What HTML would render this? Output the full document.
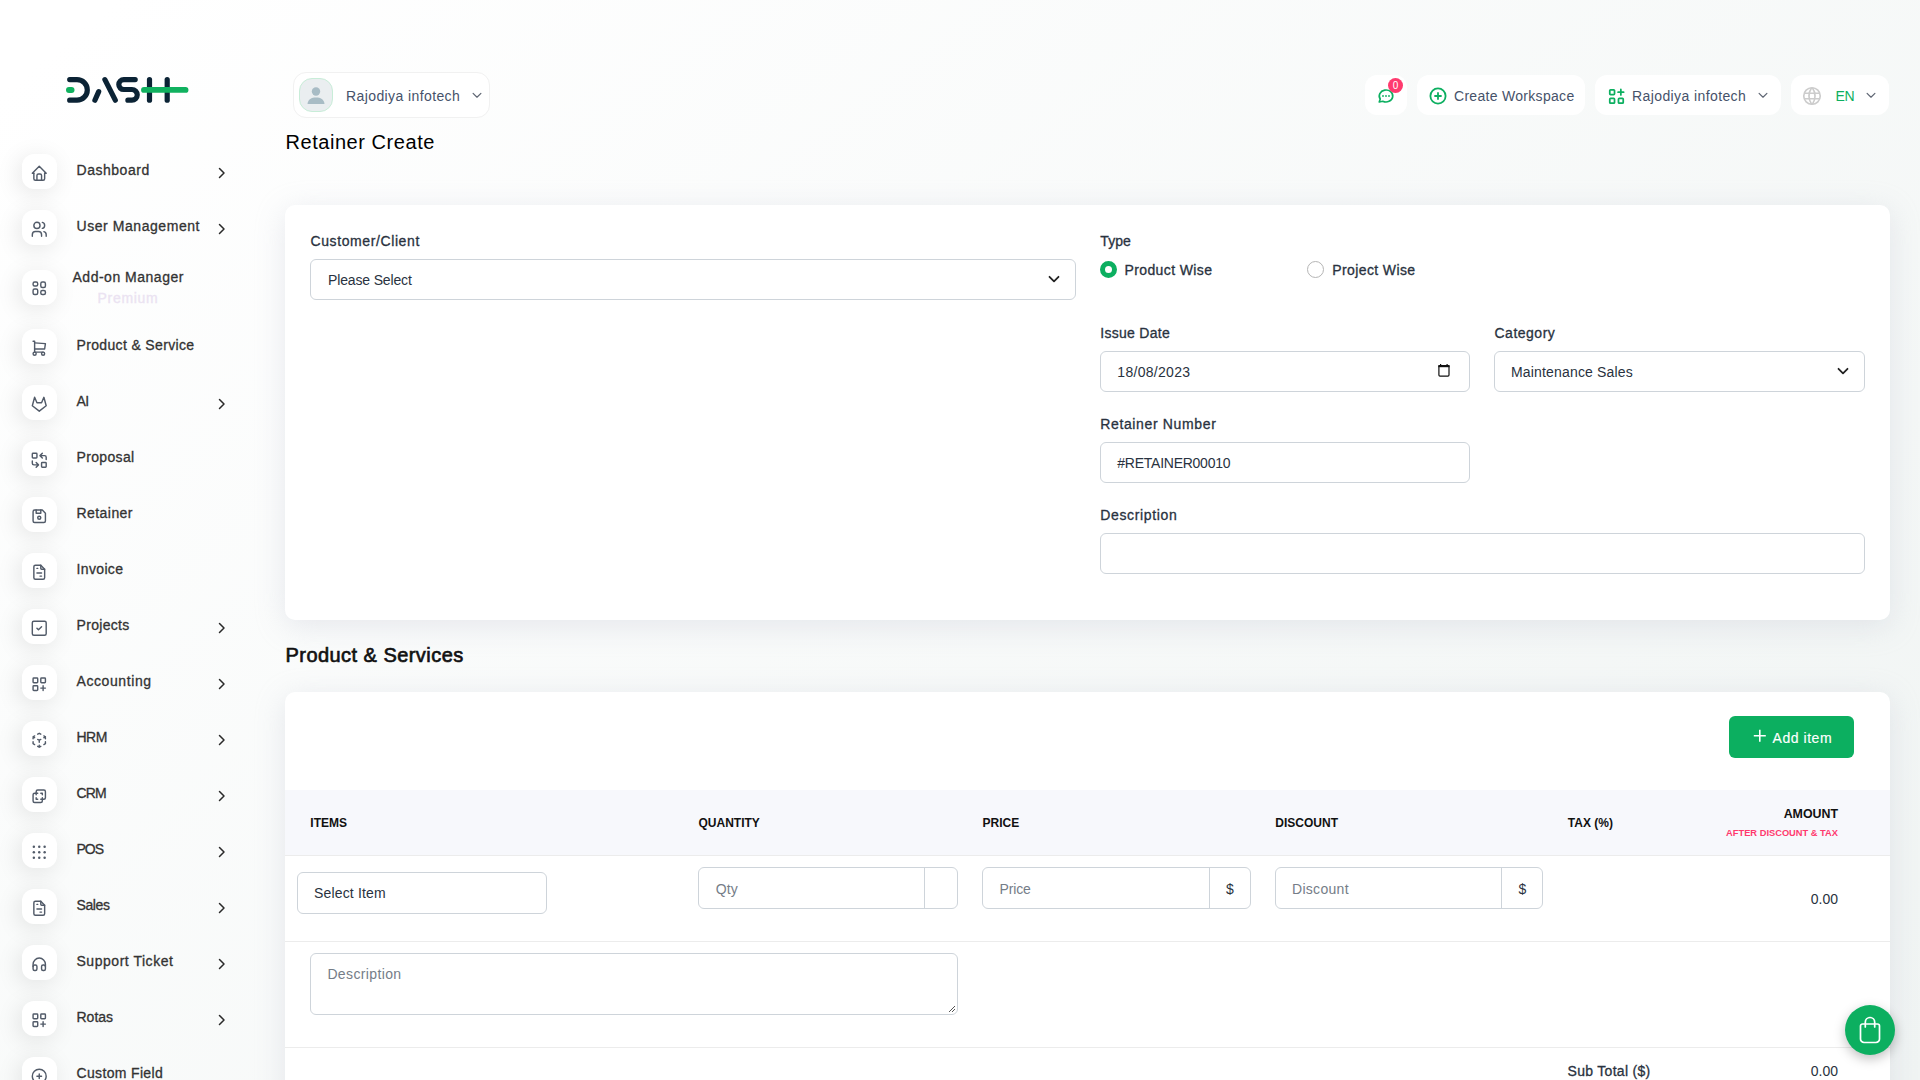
<!DOCTYPE html>
<html><head><meta charset="utf-8"><title>Retainer Create</title>
<style>
html,body{margin:0;padding:0;}
body{width:1920px;height:1080px;overflow:hidden;position:relative;font-family:"Liberation Sans", sans-serif;
background:linear-gradient(141.55deg, rgba(240,244,243,0) 3.46%, #f0f4f3 99.86%), #ffffff;}
.t{position:absolute;white-space:nowrap;line-height:1;}
.sib{position:absolute;left:22px;width:35px;height:35px;background:#fff;border-radius:12px;box-shadow:-3px 4px 23px rgba(0,0,0,0.1);display:flex;align-items:center;justify-content:center;}
.sib svg{display:block;position:relative;top:1.2px;left:-0.2px}
</style></head><body>
<svg style="position:absolute;left:0;top:0" width="200" height="120" viewBox="0 0 200 120">
<g fill="none" stroke="#0b2335" stroke-width="5.2" stroke-linecap="round">
<path d="M69.7 79.6 H77 A10.3 10.3 0 0 1 77 100.2 H69.7"/>
<path d="M94.9 100.2 L98.7 91.6"/>
<path d="M104.9 79.6 L115.3 100.2"/>
<path d="M135.2 79.6 H123.75 A4.95 4.95 0 0 0 123.75 89.5 H131.9 A5.35 5.35 0 0 1 131.9 100.2 H127.9"/>
<path d="M149.5 79.6 V100.2"/><path d="M167.2 79.6 V100.2"/>
</g>
<g stroke="#10b15f" stroke-linecap="round">
<path d="M69 90 H71.5" stroke-width="6"/>
<path d="M144 89.9 H185.5" stroke-width="5.9"/>
</g></svg>
<div class="sib" style="top:154.2px"><svg width="18.5" height="18.5" viewBox="0 0 24 24" stroke="#525b69" stroke-width="1.85" fill="none" stroke-linecap="round" stroke-linejoin="round"><path d="M5 12H3l9-9 9 9h-2"/><path d="M5 12v7a2 2 0 0 0 2 2h10a2 2 0 0 0 2-2v-7"/><path d="M9 21v-6a2 2 0 0 1 2-2h2a2 2 0 0 1 2 2v6"/></svg></div>
<div class="t" style="left:76.5px;top:163.15px;font-size:14px;font-weight:400;color:#333333;letter-spacing:0.53px;-webkit-text-stroke:0.30px #333333;">Dashboard</div>
<svg style="position:absolute;left:215.8px;top:167.2px" width="12" height="12" viewBox="0 0 12 12"><path d="M3.5 1.5 L8 6 L3.5 10.5" fill="none" stroke="#2a2a2a" stroke-width="1.5" stroke-linecap="round" stroke-linejoin="round"/></svg>
<div class="sib" style="top:210.2px"><svg width="18.5" height="18.5" viewBox="0 0 24 24" stroke="#525b69" stroke-width="1.85" fill="none" stroke-linecap="round" stroke-linejoin="round"><circle cx="9" cy="7" r="4"/><path d="M3 21v-2a4 4 0 0 1 4-4h4a4 4 0 0 1 4 4v2"/><path d="M16 3.13a4 4 0 0 1 0 7.75"/><path d="M21 21v-2a4 4 0 0 0-3-3.85"/></svg></div>
<div class="t" style="left:76.5px;top:219.15px;font-size:14px;font-weight:400;color:#333333;letter-spacing:0.56px;-webkit-text-stroke:0.30px #333333;">User Management</div>
<svg style="position:absolute;left:215.8px;top:223.2px" width="12" height="12" viewBox="0 0 12 12"><path d="M3.5 1.5 L8 6 L3.5 10.5" fill="none" stroke="#2a2a2a" stroke-width="1.5" stroke-linecap="round" stroke-linejoin="round"/></svg>
<div class="sib" style="top:270.0px"><svg width="18.5" height="18.5" viewBox="0 0 24 24" stroke="#525b69" stroke-width="1.85" fill="none" stroke-linecap="round" stroke-linejoin="round"><path d="M4 6a2 2 0 0 1 2-2h2a2 2 0 0 1 2 2v1a2 2 0 0 1-2 2H6a2 2 0 0 1-2-2z"/><path d="M4 15a2 2 0 0 1 2-2h2a2 2 0 0 1 2 2v3a2 2 0 0 1-2 2H6a2 2 0 0 1-2-2z"/><path d="M14 6a2 2 0 0 1 2-2h2a2 2 0 0 1 2 2v3a2 2 0 0 1-2 2h-2a2 2 0 0 1-2-2z"/><path d="M14 17a2 2 0 0 1 2-2h2a2 2 0 0 1 2 2v1a2 2 0 0 1-2 2h-2a2 2 0 0 1-2-2z"/></svg></div>
<div class="t" style="left:72.5px;top:270.05px;font-size:14px;font-weight:400;color:#333333;letter-spacing:0.51px;-webkit-text-stroke:0.30px #333333;">Add-on Manager</div>
<div class="t" style="left:97.5px;top:290.65px;font-size:14px;font-weight:400;color:#ebe3f2;letter-spacing:0.7px;-webkit-text-stroke:0.30px #ebe3f2;">Premium</div>
<div class="sib" style="top:329.1px"><svg width="18.5" height="18.5" viewBox="0 0 24 24" stroke="#525b69" stroke-width="1.85" fill="none" stroke-linecap="round" stroke-linejoin="round"><circle cx="6" cy="19" r="2"/><circle cx="17" cy="19" r="2"/><path d="M17 17H6V3H4"/><path d="M6 5l14 1-1 7H6"/></svg></div>
<div class="t" style="left:76.5px;top:338.05px;font-size:14px;font-weight:400;color:#333333;letter-spacing:0.35px;-webkit-text-stroke:0.30px #333333;">Product &amp; Service</div>
<div class="sib" style="top:385.1px"><svg width="18.5" height="18.5" viewBox="0 0 24 24" stroke="#525b69" stroke-width="1.85" fill="none" stroke-linecap="round" stroke-linejoin="round"><path d="M21 14l-9 7-9-7L6 3l3 7h6l3-7z"/></svg></div>
<div class="t" style="left:76.5px;top:394.05px;font-size:14px;font-weight:400;color:#333333;letter-spacing:-0.6px;-webkit-text-stroke:0.30px #333333;">AI</div>
<svg style="position:absolute;left:215.8px;top:398.1px" width="12" height="12" viewBox="0 0 12 12"><path d="M3.5 1.5 L8 6 L3.5 10.5" fill="none" stroke="#2a2a2a" stroke-width="1.5" stroke-linecap="round" stroke-linejoin="round"/></svg>
<div class="sib" style="top:441.1px"><svg width="18.5" height="18.5" viewBox="0 0 24 24" stroke="#525b69" stroke-width="1.85" fill="none" stroke-linecap="round" stroke-linejoin="round"><rect x="3" y="3" width="6" height="6" rx="1"/><rect x="15" y="15" width="6" height="6" rx="1"/><path d="M21 11V8a2 2 0 0 0-2-2h-6l3 3m0-6l-3 3"/><path d="M3 13v3a2 2 0 0 0 2 2h6l-3-3m0 6l3-3"/></svg></div>
<div class="t" style="left:76.5px;top:450.05px;font-size:14px;font-weight:400;color:#333333;letter-spacing:0.35px;-webkit-text-stroke:0.30px #333333;">Proposal</div>
<div class="sib" style="top:497.1px"><svg width="18.5" height="18.5" viewBox="0 0 24 24" stroke="#525b69" stroke-width="1.85" fill="none" stroke-linecap="round" stroke-linejoin="round"><path d="M6 4h10l4 4v10a2 2 0 0 1-2 2H6a2 2 0 0 1-2-2V6a2 2 0 0 1 2-2"/><circle cx="12" cy="14" r="2"/><path d="M14 4v4H8V4"/></svg></div>
<div class="t" style="left:76.5px;top:506.05px;font-size:14px;font-weight:400;color:#333333;letter-spacing:0.44px;-webkit-text-stroke:0.30px #333333;">Retainer</div>
<div class="sib" style="top:553.1px"><svg width="18.5" height="18.5" viewBox="0 0 24 24" stroke="#525b69" stroke-width="1.85" fill="none" stroke-linecap="round" stroke-linejoin="round"><path d="M14 3v4a1 1 0 0 0 1 1h4"/><path d="M17 21H7a2 2 0 0 1-2-2V5a2 2 0 0 1 2-2h7l5 5v11a2 2 0 0 1-2 2z"/><path d="M9 7h1M9 13h6M13 17h2"/></svg></div>
<div class="t" style="left:76.5px;top:562.05px;font-size:14px;font-weight:400;color:#333333;letter-spacing:0.36px;-webkit-text-stroke:0.30px #333333;">Invoice</div>
<div class="sib" style="top:609.1px"><svg width="18.5" height="18.5" viewBox="0 0 24 24" stroke="#525b69" stroke-width="1.85" fill="none" stroke-linecap="round" stroke-linejoin="round"><path d="M3 5a2 2 0 0 1 2-2h14a2 2 0 0 1 2 2v14a2 2 0 0 1-2 2H5a2 2 0 0 1-2-2z"/><path d="M9 12l2 2 4-4"/></svg></div>
<div class="t" style="left:76.5px;top:618.05px;font-size:14px;font-weight:400;color:#333333;letter-spacing:0.32px;-webkit-text-stroke:0.30px #333333;">Projects</div>
<svg style="position:absolute;left:215.8px;top:622.1px" width="12" height="12" viewBox="0 0 12 12"><path d="M3.5 1.5 L8 6 L3.5 10.5" fill="none" stroke="#2a2a2a" stroke-width="1.5" stroke-linecap="round" stroke-linejoin="round"/></svg>
<div class="sib" style="top:665.1px"><svg width="18.5" height="18.5" viewBox="0 0 24 24" stroke="#525b69" stroke-width="1.85" fill="none" stroke-linecap="round" stroke-linejoin="round"><rect x="4" y="4" width="6" height="6" rx="1"/><rect x="14" y="4" width="6" height="6" rx="1"/><rect x="4" y="14" width="6" height="6" rx="1"/><path d="M14 17h6m-3-3v6"/></svg></div>
<div class="t" style="left:76.5px;top:674.05px;font-size:14px;font-weight:400;color:#333333;letter-spacing:0.59px;-webkit-text-stroke:0.30px #333333;">Accounting</div>
<svg style="position:absolute;left:215.8px;top:678.1px" width="12" height="12" viewBox="0 0 12 12"><path d="M3.5 1.5 L8 6 L3.5 10.5" fill="none" stroke="#2a2a2a" stroke-width="1.5" stroke-linecap="round" stroke-linejoin="round"/></svg>
<div class="sib" style="top:721.1px"><svg width="18.5" height="18.5" viewBox="0 0 24 24" stroke="#525b69" stroke-width="1.85" fill="none" stroke-linecap="round" stroke-linejoin="round"><path d="M6 17.6l-2-1.1V14M4 10V7.5l2-1.1M10 4.1L12 3l2 1.1M18 6.4l2 1.1V10M20 14v2.5l-2 1.12M14 19.9L12 21l-2-1.1M12 12l2-1.1M18 8.6l2-1.1M12 12v2.5M12 18.5V21M12 12l-2-1.12M6 8.6L4 7.5"/></svg></div>
<div class="t" style="left:76.5px;top:730.05px;font-size:14px;font-weight:400;color:#333333;letter-spacing:-0.5px;-webkit-text-stroke:0.30px #333333;">HRM</div>
<svg style="position:absolute;left:215.8px;top:734.1px" width="12" height="12" viewBox="0 0 12 12"><path d="M3.5 1.5 L8 6 L3.5 10.5" fill="none" stroke="#2a2a2a" stroke-width="1.5" stroke-linecap="round" stroke-linejoin="round"/></svg>
<div class="sib" style="top:777.1px"><svg width="18.5" height="18.5" viewBox="0 0 24 24" stroke="#525b69" stroke-width="1.85" fill="none" stroke-linecap="round" stroke-linejoin="round"><path d="M16 16v2a2 2 0 0 1-2 2H6a2 2 0 0 1-2-2v-8a2 2 0 0 1 2-2h2V6a2 2 0 0 1 2-2h8a2 2 0 0 1 2 2v8a2 2 0 0 1-2 2h-2"/><path d="M10 8H8v2M8 14v2h2M14 8h2v2M16 14v2h-2"/></svg></div>
<div class="t" style="left:76.5px;top:786.05px;font-size:14px;font-weight:400;color:#333333;letter-spacing:-0.9px;-webkit-text-stroke:0.30px #333333;">CRM</div>
<svg style="position:absolute;left:215.8px;top:790.1px" width="12" height="12" viewBox="0 0 12 12"><path d="M3.5 1.5 L8 6 L3.5 10.5" fill="none" stroke="#2a2a2a" stroke-width="1.5" stroke-linecap="round" stroke-linejoin="round"/></svg>
<div class="sib" style="top:833.1px"><svg width="18.5" height="18.5" viewBox="0 0 24 24" stroke="#525b69" stroke-width="1.85" fill="none" stroke-linecap="round" stroke-linejoin="round"><g fill="#525b69" stroke="none"><circle cx="5" cy="5" r="1.6"/><circle cx="12" cy="5" r="1.6"/><circle cx="19" cy="5" r="1.6"/><circle cx="5" cy="12" r="1.6"/><circle cx="12" cy="12" r="1.6"/><circle cx="19" cy="12" r="1.6"/><circle cx="5" cy="19" r="1.6"/><circle cx="12" cy="19" r="1.6"/><circle cx="19" cy="19" r="1.6"/></g></svg></div>
<div class="t" style="left:76.5px;top:842.05px;font-size:14px;font-weight:400;color:#333333;letter-spacing:-1.0px;-webkit-text-stroke:0.30px #333333;">POS</div>
<svg style="position:absolute;left:215.8px;top:846.1px" width="12" height="12" viewBox="0 0 12 12"><path d="M3.5 1.5 L8 6 L3.5 10.5" fill="none" stroke="#2a2a2a" stroke-width="1.5" stroke-linecap="round" stroke-linejoin="round"/></svg>
<div class="sib" style="top:889.1px"><svg width="18.5" height="18.5" viewBox="0 0 24 24" stroke="#525b69" stroke-width="1.85" fill="none" stroke-linecap="round" stroke-linejoin="round"><path d="M14 3v4a1 1 0 0 0 1 1h4"/><path d="M17 21H7a2 2 0 0 1-2-2V5a2 2 0 0 1 2-2h7l5 5v11a2 2 0 0 1-2 2z"/><path d="M9 7h1M9 13h6M13 17h2"/></svg></div>
<div class="t" style="left:76.5px;top:898.05px;font-size:14px;font-weight:400;color:#333333;letter-spacing:-0.4px;-webkit-text-stroke:0.30px #333333;">Sales</div>
<svg style="position:absolute;left:215.8px;top:902.1px" width="12" height="12" viewBox="0 0 12 12"><path d="M3.5 1.5 L8 6 L3.5 10.5" fill="none" stroke="#2a2a2a" stroke-width="1.5" stroke-linecap="round" stroke-linejoin="round"/></svg>
<div class="sib" style="top:945.1px"><svg width="18.5" height="18.5" viewBox="0 0 24 24" stroke="#525b69" stroke-width="1.85" fill="none" stroke-linecap="round" stroke-linejoin="round"><rect x="4" y="13" width="5" height="7" rx="2"/><rect x="15" y="13" width="5" height="7" rx="2"/><path d="M4 15v-3a8 8 0 0 1 16 0v3"/></svg></div>
<div class="t" style="left:76.5px;top:954.05px;font-size:14px;font-weight:400;color:#333333;letter-spacing:0.53px;-webkit-text-stroke:0.30px #333333;">Support Ticket</div>
<svg style="position:absolute;left:215.8px;top:958.1px" width="12" height="12" viewBox="0 0 12 12"><path d="M3.5 1.5 L8 6 L3.5 10.5" fill="none" stroke="#2a2a2a" stroke-width="1.5" stroke-linecap="round" stroke-linejoin="round"/></svg>
<div class="sib" style="top:1001.1px"><svg width="18.5" height="18.5" viewBox="0 0 24 24" stroke="#525b69" stroke-width="1.85" fill="none" stroke-linecap="round" stroke-linejoin="round"><rect x="4" y="4" width="6" height="6" rx="1"/><rect x="14" y="4" width="6" height="6" rx="1"/><rect x="4" y="14" width="6" height="6" rx="1"/><path d="M14 17h6m-3-3v6"/></svg></div>
<div class="t" style="left:76.5px;top:1010.05px;font-size:14px;font-weight:400;color:#333333;letter-spacing:0.0px;-webkit-text-stroke:0.30px #333333;">Rotas</div>
<svg style="position:absolute;left:215.8px;top:1014.1px" width="12" height="12" viewBox="0 0 12 12"><path d="M3.5 1.5 L8 6 L3.5 10.5" fill="none" stroke="#2a2a2a" stroke-width="1.5" stroke-linecap="round" stroke-linejoin="round"/></svg>
<div class="sib" style="top:1057.1px"><svg width="18.5" height="18.5" viewBox="0 0 24 24" stroke="#525b69" stroke-width="1.85" fill="none" stroke-linecap="round" stroke-linejoin="round"><circle cx="12" cy="12" r="9"/><path d="M9 12h6M12 9v6"/></svg></div>
<div class="t" style="left:76.5px;top:1066.05px;font-size:14px;font-weight:400;color:#333333;letter-spacing:0.34px;-webkit-text-stroke:0.30px #333333;">Custom Field</div>
<div style="position:absolute;left:293px;top:72px;width:197px;height:46px;box-sizing:border-box;background:#fff;border:1px solid #f1f1f1;border-radius:13px;"></div>
<div style="position:absolute;left:299px;top:78px;width:34px;height:34px;box-sizing:border-box;border-radius:13px;background:#eaeef0;border:1.5px solid #c8edd8;overflow:hidden"><svg width="32" height="32" viewBox="0 0 32 32"><circle cx="16" cy="12.5" r="4.2" fill="#a8bcc5"/><path d="M7.5 25 C8 20 11.5 18.5 16 18.5 C20.5 18.5 24 20 24.5 25 Z" fill="#a8bcc5"/></svg></div>
<div class="t" style="left:346px;top:88.85px;font-size:14px;font-weight:400;color:#46526a;letter-spacing:0.4px;">Rajodiya infotech</div>
<svg style="position:absolute;left:471px;top:90px" width="12" height="10" viewBox="0 0 12 10"><path d="M2.1 3.4 L6 7.2 L9.9 3.4" fill="none" stroke="#5f6673" stroke-width="1.2" stroke-linecap="round" stroke-linejoin="round"/></svg>
<div class="t" style="left:285.5px;top:131.87px;font-size:20px;font-weight:400;color:#000000;letter-spacing:0.55px;">Retainer Create</div>
<div style="position:absolute;left:1365px;top:75px;width:42px;height:40px;box-sizing:border-box;background:#fff;border-radius:12px;"></div>
<svg style="position:absolute;left:1376px;top:87px" width="20" height="18" viewBox="0 0 24 24" fill="none" stroke="#0CAF60" stroke-width="2.2" stroke-linecap="round" stroke-linejoin="round"><path d="M3 20l1.3-3.9A9 8 0 1 1 7.7 19L3 20"/><path d="M8 12h.01M12 12h.01M16 12h.01" stroke-width="2.4"/></svg>
<div style="position:absolute;left:1388px;top:77.5px;width:15px;height:15px;border-radius:50%;background:#ff3a6e;color:#fff;font-size:10px;line-height:15px;text-align:center;font-family:'Liberation Sans',sans-serif">0</div>
<div style="position:absolute;left:1417px;top:75px;width:168px;height:40px;box-sizing:border-box;background:#fff;border-radius:12px;"></div>
<svg style="position:absolute;left:1429px;top:87px" width="18" height="18" viewBox="0 0 18 18" fill="none" stroke="#0CAF60" stroke-width="1.8" stroke-linecap="round"><circle cx="9" cy="9" r="7.6"/><path d="M6 9h6M9 6v6"/></svg>
<div class="t" style="left:1454px;top:89.45px;font-size:14px;font-weight:400;color:#46526a;letter-spacing:0.3px;">Create Workspace</div>
<div style="position:absolute;left:1595px;top:75px;width:186px;height:40px;box-sizing:border-box;background:#fff;border-radius:12px;"></div>
<svg style="position:absolute;left:1606.5px;top:86.5px" width="19" height="19" viewBox="0 0 24 24" fill="none" stroke="#0CAF60" stroke-width="2.2" stroke-linecap="round"><rect x="3.5" y="3.5" width="6" height="6" rx="1"/><rect x="3.5" y="14.5" width="6" height="6" rx="1"/><rect x="14.5" y="14.5" width="6" height="6" rx="1"/><path d="M14 6.5h7M17.5 3v7"/></svg>
<div class="t" style="left:1632px;top:89.05px;font-size:14px;font-weight:400;color:#46526a;letter-spacing:0.4px;">Rajodiya infotech</div>
<svg style="position:absolute;left:1757px;top:90px" width="12" height="10" viewBox="0 0 12 10"><path d="M2.1 3.4 L6 7.2 L9.9 3.4" fill="none" stroke="#5f6673" stroke-width="1.2" stroke-linecap="round" stroke-linejoin="round"/></svg>
<div style="position:absolute;left:1791px;top:75px;width:98px;height:40px;box-sizing:border-box;background:#fff;border-radius:12px;"></div>
<svg style="position:absolute;left:1801.2px;top:84.8px" width="22" height="22" viewBox="0 0 24 24" fill="none" stroke="#cccccc" stroke-width="1.8"><circle cx="12" cy="12" r="9"/><path d="M3.6 9h16.8M3.6 15h16.8"/><path d="M11.5 3a17 17 0 0 0 0 18M12.5 3a17 17 0 0 1 0 18"/></svg>
<div class="t" style="left:1835.5px;top:89.15px;font-size:14px;font-weight:400;color:#0CAF60;letter-spacing:-0.45px;">EN</div>
<svg style="position:absolute;left:1865px;top:90px" width="12" height="10" viewBox="0 0 12 10"><path d="M2.1 3.4 L6 7.2 L9.9 3.4" fill="none" stroke="#5f6673" stroke-width="1.2" stroke-linecap="round" stroke-linejoin="round"/></svg>
<div style="position:absolute;left:285px;top:205px;width:1605px;height:415px;box-sizing:border-box;background:#fff;border-radius:10px;box-shadow:0 6px 30px rgba(182,186,203,0.3);"></div>
<div class="t" style="left:310.5px;top:233.95px;font-size:14px;font-weight:400;color:#293240;letter-spacing:0.6px;-webkit-text-stroke:0.30px #293240;">Customer/Client</div>
<div style="position:absolute;left:310px;top:259px;width:766px;height:41px;box-sizing:border-box;background:#fff;border:1px solid #ced4da;border-radius:6px;"></div>
<div class="t" style="left:328px;top:272.65px;font-size:14px;font-weight:400;color:#293240;letter-spacing:-0.15px;">Please Select</div>
<svg style="position:absolute;left:1047px;top:272.4px" width="14" height="14" viewBox="0 0 14 14"><path d="M2.5 4.8 L7 9.3 L11.5 4.8" fill="none" stroke="#222" stroke-width="1.8" stroke-linecap="round" stroke-linejoin="round"/></svg>
<div class="t" style="left:1100.3px;top:234.45px;font-size:14px;font-weight:400;color:#293240;letter-spacing:0.05px;-webkit-text-stroke:0.30px #293240;">Type</div>
<div style="position:absolute;left:1099.5px;top:261px;width:17px;height:17px;box-sizing:border-box;border-radius:50%;border:5px solid #0CAF60;background:#fff"></div>
<div class="t" style="left:1124.5px;top:263.25px;font-size:14px;font-weight:400;color:#293240;letter-spacing:0.38px;-webkit-text-stroke:0.30px #293240;">Product Wise</div>
<div style="position:absolute;left:1307px;top:261px;width:17px;height:17px;box-sizing:border-box;border-radius:50%;border:1px solid #b5b5b5;background:#fff"></div>
<div class="t" style="left:1332.3px;top:263.25px;font-size:14px;font-weight:400;color:#293240;letter-spacing:0.38px;-webkit-text-stroke:0.30px #293240;">Project Wise</div>
<div class="t" style="left:1100.2px;top:326.45px;font-size:14px;font-weight:400;color:#293240;letter-spacing:0.3px;-webkit-text-stroke:0.30px #293240;">Issue Date</div>
<div style="position:absolute;left:1100px;top:351px;width:370px;height:41px;box-sizing:border-box;background:#fff;border:1px solid #ced4da;border-radius:6px;"></div>
<div class="t" style="left:1117.3px;top:365.35px;font-size:14px;font-weight:400;color:#293240;letter-spacing:0.3px;">18/08/2023</div>
<svg style="position:absolute;left:1437px;top:363px" width="14" height="15" viewBox="0 0 14 15"><rect x="1.9" y="2.6" width="10.1" height="10.5" rx="1" fill="none" stroke="#111" stroke-width="1.2"/><rect x="1.3" y="2.1" width="11.3" height="2.1" fill="#111"/><path d="M3.6 1v2M10.1 1v2" stroke="#111" stroke-width="1.2"/></svg>
<div class="t" style="left:1494.5px;top:326.45px;font-size:14px;font-weight:400;color:#293240;letter-spacing:0.5px;-webkit-text-stroke:0.30px #293240;">Category</div>
<div style="position:absolute;left:1494px;top:351px;width:371px;height:41px;box-sizing:border-box;background:#fff;border:1px solid #ced4da;border-radius:6px;"></div>
<div class="t" style="left:1511px;top:365.35px;font-size:14px;font-weight:400;color:#293240;letter-spacing:0.17px;">Maintenance Sales</div>
<svg style="position:absolute;left:1836px;top:364.4px" width="14" height="14" viewBox="0 0 14 14"><path d="M2.5 4.8 L7 9.3 L11.5 4.8" fill="none" stroke="#222" stroke-width="1.8" stroke-linecap="round" stroke-linejoin="round"/></svg>
<div class="t" style="left:1100.2px;top:417.45px;font-size:14px;font-weight:400;color:#293240;letter-spacing:0.65px;-webkit-text-stroke:0.30px #293240;">Retainer Number</div>
<div style="position:absolute;left:1100px;top:442px;width:370px;height:41px;box-sizing:border-box;background:#fff;border:1px solid #ced4da;border-radius:6px;"></div>
<div class="t" style="left:1117.3px;top:456.35px;font-size:14px;font-weight:400;color:#293240;letter-spacing:-0.25px;">#RETAINER00010</div>
<div class="t" style="left:1100.2px;top:508.45px;font-size:14px;font-weight:400;color:#293240;letter-spacing:0.65px;-webkit-text-stroke:0.30px #293240;">Description</div>
<div style="position:absolute;left:1100px;top:533px;width:765px;height:41px;box-sizing:border-box;background:#fff;border:1px solid #ced4da;border-radius:6px;"></div>
<div class="t" style="left:285.5px;top:645.47px;font-size:20px;font-weight:400;color:#111111;letter-spacing:0.45px;-webkit-text-stroke:0.43px #111111;-webkit-text-stroke:0.65px #111;">Product &amp; Services</div>
<div style="position:absolute;left:285px;top:692px;width:1605px;height:500px;box-sizing:border-box;background:#fff;border-radius:10px;box-shadow:0 6px 30px rgba(182,186,203,0.3);"></div>
<div style="position:absolute;left:1729px;top:716px;width:125px;height:42px;box-sizing:border-box;background:#0CAF60;border-radius:6px;"></div>
<svg style="position:absolute;left:1753px;top:729.2px" width="14" height="14" viewBox="0 0 14 14"><path d="M6.8 0.8v12M0.8 6.8h12" stroke="#fff" stroke-width="1.6"/></svg>
<div class="t" style="left:1772.5px;top:731.05px;font-size:14px;font-weight:400;color:#ffffff;letter-spacing:0.55px;-webkit-text-stroke:0.15px #fff;">Add item</div>
<div style="position:absolute;left:285px;top:790px;width:1605px;height:66px;box-sizing:border-box;background:#f7f8fc;border-bottom:1px solid #ececec;"></div>
<div class="t" style="left:310.3px;top:817.14px;font-size:12px;font-weight:700;color:#111111;letter-spacing:0px;">ITEMS</div>
<div class="t" style="left:698.5px;top:817.14px;font-size:12px;font-weight:700;color:#111111;letter-spacing:0px;">QUANTITY</div>
<div class="t" style="left:982.5px;top:817.14px;font-size:12px;font-weight:700;color:#111111;letter-spacing:0px;">PRICE</div>
<div class="t" style="left:1275.3px;top:817.14px;font-size:12px;font-weight:700;color:#111111;letter-spacing:0px;">DISCOUNT</div>
<div class="t" style="left:1567.8px;top:816.94px;font-size:12px;font-weight:700;color:#111111;letter-spacing:0px;">TAX (%)</div>
<div class="t" style="right:82px;text-align:right;top:807.60px;font-size:12.4px;font-weight:700;color:#111111;letter-spacing:0px;">AMOUNT</div>
<div class="t" style="right:82px;text-align:right;top:829.23px;font-size:9.3px;font-weight:700;color:#ff3a6e;letter-spacing:0px;">AFTER DISCOUNT &amp; TAX</div>
<div style="position:absolute;left:297px;top:872px;width:250px;height:42px;box-sizing:border-box;background:#fff;border:1px solid #ced4da;border-radius:6px;"></div>
<div class="t" style="left:314.1px;top:886.35px;font-size:14px;font-weight:400;color:#293240;letter-spacing:0.15px;">Select Item</div>
<div style="position:absolute;left:698px;top:867px;width:260px;height:42px;box-sizing:border-box;background:#fff;border:1px solid #ced4da;border-radius:6px;"></div>
<div style="position:absolute;left:924px;top:867px;width:1px;height:42px;box-sizing:border-box;background:#ced4da;"></div>
<div class="t" style="left:715.8px;top:881.75px;font-size:14px;font-weight:400;color:#757d88;letter-spacing:0.1px;">Qty</div>
<div style="position:absolute;left:982px;top:867px;width:269px;height:42px;box-sizing:border-box;background:#fff;border:1px solid #ced4da;border-radius:6px;"></div>
<div style="position:absolute;left:1209px;top:867px;width:1px;height:42px;box-sizing:border-box;background:#ced4da;"></div>
<div class="t" style="left:999.4px;top:881.75px;font-size:14px;font-weight:400;color:#757d88;letter-spacing:-0.1px;">Price</div>
<div class="t" style="left:1226px;top:881.75px;font-size:14px;font-weight:400;color:#293240;letter-spacing:0px;">$</div>
<div style="position:absolute;left:1275px;top:867px;width:268px;height:42px;box-sizing:border-box;background:#fff;border:1px solid #ced4da;border-radius:6px;"></div>
<div style="position:absolute;left:1501px;top:867px;width:1px;height:42px;box-sizing:border-box;background:#ced4da;"></div>
<div class="t" style="left:1292px;top:881.75px;font-size:14px;font-weight:400;color:#757d88;letter-spacing:0.3px;">Discount</div>
<div class="t" style="left:1518.5px;top:881.75px;font-size:14px;font-weight:400;color:#293240;letter-spacing:0px;">$</div>
<div class="t" style="right:82px;text-align:right;top:891.65px;font-size:14px;font-weight:400;color:#293240;letter-spacing:0px;">0.00</div>
<div style="position:absolute;left:285px;top:941px;width:1605px;height:1px;box-sizing:border-box;background:#ececec;"></div>
<div style="position:absolute;left:310px;top:953px;width:648px;height:62px;box-sizing:border-box;background:#fff;border:1px solid #ced4da;border-radius:6px;"></div>
<div class="t" style="left:327.4px;top:967.15px;font-size:14px;font-weight:400;color:#757d88;letter-spacing:0.37px;">Description</div>
<svg style="position:absolute;left:946px;top:1003px" width="10" height="10" viewBox="0 0 10 10"><path d="M9 3L3 9M9 6L6 9" stroke="#555" stroke-width="1"/></svg>
<div style="position:absolute;left:285px;top:1047px;width:1605px;height:1px;box-sizing:border-box;background:#ececec;"></div>
<div class="t" style="left:1567.5px;top:1063.85px;font-size:14px;font-weight:400;color:#293240;letter-spacing:0.3px;-webkit-text-stroke:0.30px #293240;">Sub Total ($)</div>
<div class="t" style="right:82px;text-align:right;top:1063.85px;font-size:14px;font-weight:400;color:#293240;letter-spacing:0px;">0.00</div>
<div style="position:absolute;left:1845px;top:1005px;width:50px;height:50px;border-radius:50%;background:#0CAF60;box-shadow:0 4px 12px rgba(0,0,0,0.25)"></div>
<svg style="position:absolute;left:1857px;top:1015px" width="26" height="30" viewBox="0 0 26 30" fill="none" stroke="#fff" stroke-width="1.7" stroke-linecap="round" stroke-linejoin="round"><path d="M5.5 9h15a2 2 0 0 1 2 2v13a3.5 3.5 0 0 1-3.5 3.5H7A3.5 3.5 0 0 1 3.5 24V11a2 2 0 0 1 2-2z"/><path d="M8.3 12V7.2a4.7 4.7 0 0 1 9.4 0V12"/></svg>
</body></html>
